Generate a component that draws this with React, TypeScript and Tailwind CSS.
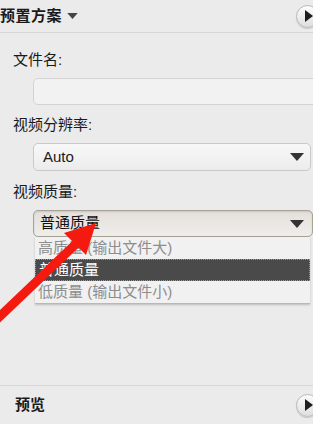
import React from 'react';

const font = { fontFamily: '"Liberation Sans", "Noto Sans CJK SC", sans-serif' };

const CaretDown: React.FC<{ className?: string }> = ({ className }) => (
  <svg viewBox="0 0 14 8" className={className}>
    <path d="M0 0 H14 L7 8 Z" fill="currentColor" />
  </svg>
);

const RoundPlay: React.FC = () => (
  <div className="w-[23px] h-[23px] shrink-0 rounded-full border border-[#b9b9b9] bg-gradient-to-b from-[#fdfdfd] to-[#dedede] shadow-[0_1px_1px_rgba(0,0,0,0.15)] flex items-center justify-center -mr-[6px]">
    <svg viewBox="0 0 8 12" className="w-[8px] h-[12px] ml-[3px]">
      <path d="M0 0 L8 6 L0 12 Z" fill="#1e1e1e" />
    </svg>
  </div>
);

const qualityOptions = ['高质量 (输出文件大)', '普通质量', '低质量 (输出文件小)'];

const App: React.FC = () => {
  return (
    <div className="relative w-[313px] h-[424px] overflow-hidden bg-[#ebebeb] flex flex-col text-[#1a1a1a]" style={font}>
      {/* header */}
      <div className="h-[33px] shrink-0 flex items-center justify-between border-b border-[#d6d6d6]">
        <div className="flex items-center gap-[5px]">
          <span className="text-[15px] font-bold tracking-[0.5px]">预置方案</span>
          <CaretDown className="w-[11px] h-[6px] text-[#444]" />
        </div>
        <RoundPlay />
      </div>

      <div className="flex flex-col pl-[13px]">
        <div className="mt-[17px] h-[20px] leading-[20px] text-[15px]">文件名:</div>
        <div className="mt-[8px] ml-[20px] -mr-[8px] h-[27px] rounded-[5px] border border-[#d3d3d3] bg-[#f2f2f2]" />

        <div className="mt-[10px] h-[20px] leading-[20px] text-[15px]">视频分辨率:</div>
        <div className="mt-[8px] ml-[20px] mr-[2px] h-[28px] rounded-[5px] border border-[#c9c9c9] bg-gradient-to-b from-[#f8f8f8] to-[#ececec] flex items-center justify-between pl-[9px] pr-[6px]">
          <span className="text-[15px]">Auto</span>
          <CaretDown className="w-[14px] h-[8px] text-[#333]" />
        </div>

        <div className="mt-[11px] h-[20px] leading-[20px] text-[15px]">视频质量:</div>
        <div className="relative mt-[8px] ml-[20px]">
          <div className="h-[27px] rounded-[5px] border border-[#a8a195] bg-gradient-to-b from-[#e4e1dc] to-[#efedea] shadow-[inset_0_1px_2px_rgba(0,0,0,0.12)] flex items-center justify-between pl-[6px] pr-[8px]">
            <span className="text-[15px] text-[#111]">普通质量</span>
            <CaretDown className="w-[14px] h-[8px] text-[#333]" />
          </div>
          {/* open dropdown menu */}
          <div className="absolute left-[2px] right-[3px] top-[27px] bg-[#f1f1f1] border-b border-[#b8b8b8] shadow-[0_1px_2px_rgba(0,0,0,0.2)] flex flex-col">
            {qualityOptions.map((opt, i) =>
              i === 1 ? (
                <div key={opt} className="h-[22px] leading-[20px] pl-[3px] text-[15px] text-white bg-[#4a4a4a] border border-dotted border-[#9a9a9a]">
                  {opt}
                </div>
              ) : (
                <div key={opt} className="h-[22px] leading-[22px] pl-[3px] text-[15px] text-[#8d8d8d]">
                  {opt}
                </div>
              )
            )}
          </div>
        </div>
      </div>

      {/* footer */}
      <div className="mt-auto h-[39px] shrink-0 border-t border-[#d6d6d6] flex items-center justify-between pl-[15px]">
        <span className="text-[15px] font-bold">预览</span>
        <RoundPlay />
      </div>

      {/* red annotation arrow */}
      <svg className="absolute left-0 top-0 w-[313px] h-[424px] pointer-events-none" viewBox="0 0 313 424">
        <path d="M-6 322 L80 240" stroke="#f41a0f" strokeWidth="9" />
        <path d="M96 223 L64 233 L86 255 Z" fill="#f41a0f" />
      </svg>
    </div>
  );
};

export default App;
